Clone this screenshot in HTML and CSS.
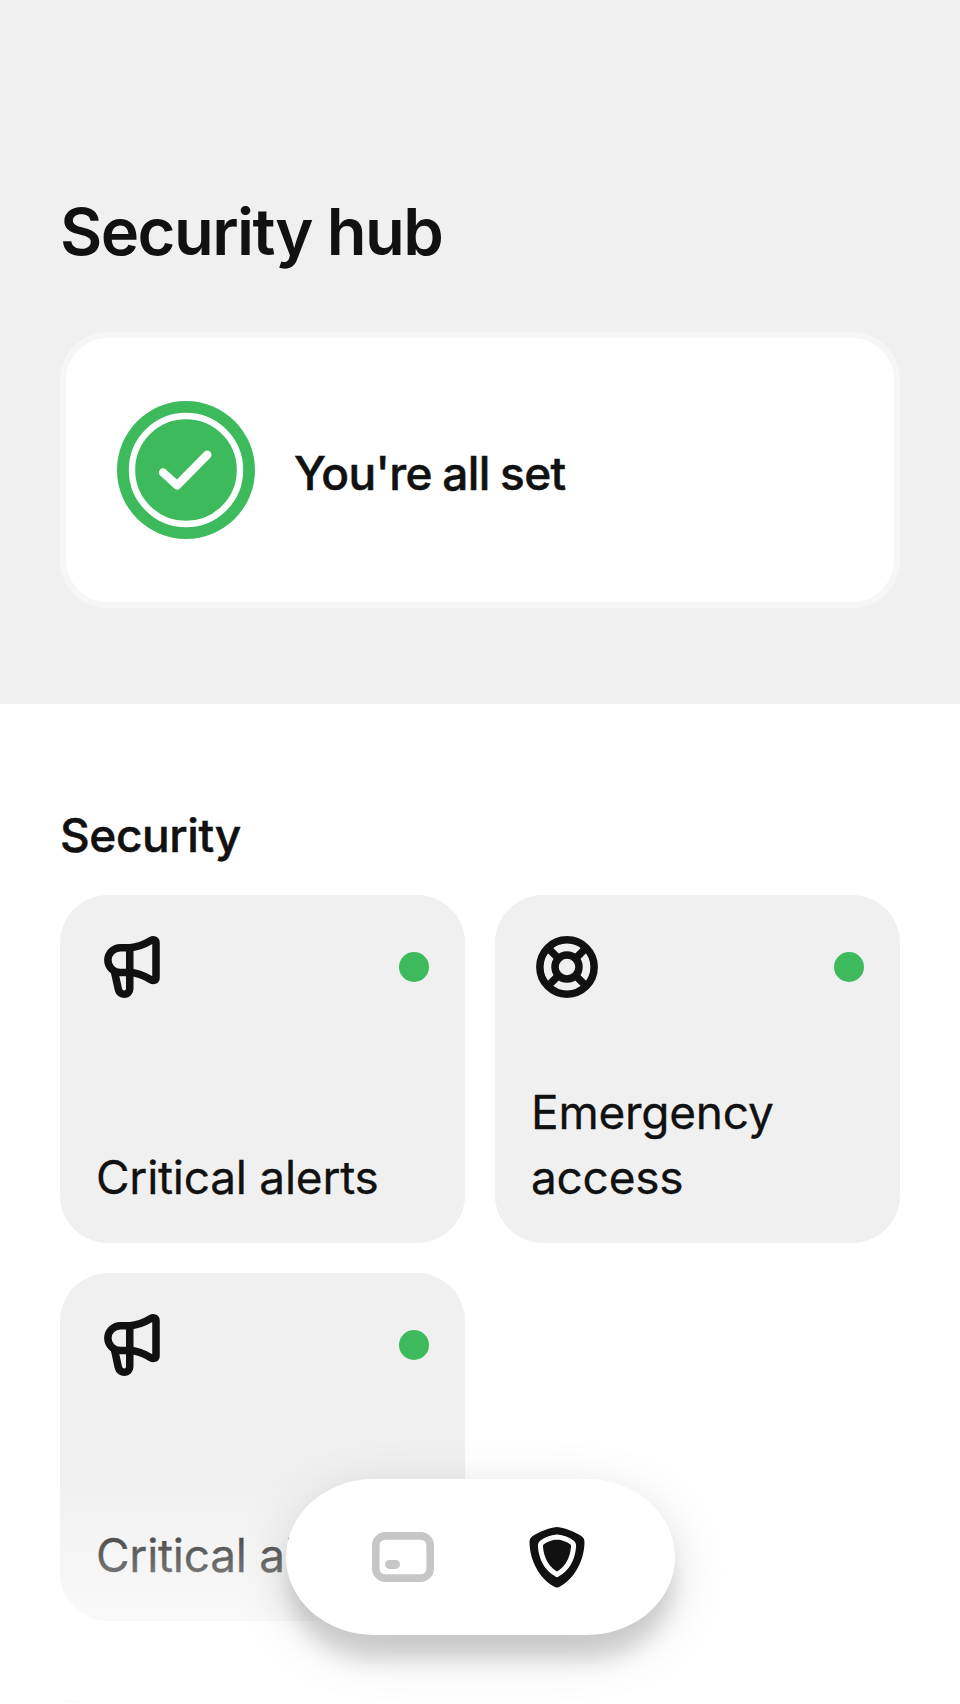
FILE: index.html
```html
<!DOCTYPE html>
<html lang="en">
<head>
<meta charset="utf-8">
<title>Security hub</title>
<link rel="stylesheet" href="styles.css">
</head>
<body>
<svg class="sprite" aria-hidden="true">
  <symbol id="megaphone" viewBox="0 0 24 24">
    <g fill="none" stroke="currentColor" stroke-width="2.5" stroke-linejoin="round" stroke-linecap="round">
      <path d="M11.25 5.55H8.1a4.15 4.15 0 0 0 0 8.3h3.15c2.5 0 4.8 1.05 7.05 2.4.85.5 1.7.2 1.7-.7V3.900c0-.9-.85-1.200-1.700-.7-2.250 1.350-4.550 2.350-7.050 2.350z"/>
      <path d="M11.250 5.550v13.700c0 2.300-3.300 2.500-3.800.2L6.200 13.700"/>
    </g>
  </symbol>
  <symbol id="lifebuoy" viewBox="0 0 24 24">
    <g fill="none" stroke="currentColor" stroke-width="2.5">
      <circle cx="12" cy="12" r="9.05"/>
      <circle cx="12" cy="12" r="4"/>
      <path d="M5.700 5.700l3.500 3.500M18.300 5.700l-3.500 3.500M5.700 18.300l3.500-3.500M18.300 18.300l-3.500-3.500"/>
    </g>
  </symbol>
</svg>
<div class="screen">
  <header class="hero">
    <h1 class="hero-title">Security hub</h1>
    <div class="status-card">
      <svg class="status-icon" viewBox="0 0 138 138">
        <circle cx="69" cy="69" r="69" fill="#3cba5c"/>
        <circle cx="69" cy="69" r="54" fill="none" stroke="#fcfffd" stroke-width="6.4"/>
        <path d="M46 71.5L60.2 84.3 90.3 53.7" fill="none" stroke="#fcfffd" stroke-width="8.4" stroke-linecap="round" stroke-linejoin="round"/>
      </svg>
      <p class="status-text">You're all set</p>
    </div>
  </header>
  <main class="content">
    <h2 class="section-title">Security</h2>
    <div class="tiles">
      <div class="tile">
        <div class="tile-top"><svg class="tile-icon"><use href="#megaphone"/></svg><span class="dot"></span></div>
        <p class="tile-label">Critical alerts</p>
      </div>
      <div class="tile">
        <div class="tile-top"><svg class="tile-icon"><use href="#lifebuoy"/></svg><span class="dot"></span></div>
        <p class="tile-label">Emergency access</p>
      </div>
      <div class="tile">
        <div class="tile-top"><svg class="tile-icon"><use href="#megaphone"/></svg><span class="dot"></span></div>
        <p class="tile-label">Critical alerts</p>
      </div>
    </div>
    <div class="next-section"></div>
  </main>
  <div class="fade"></div>
  <nav class="tabbar">
    <svg class="tab tab-card" viewBox="0 0 72 72">
      <rect x="8.8" y="14.9" width="54.4" height="42.2" rx="9.5" fill="none" stroke="currentColor" stroke-width="7.6"/>
      <rect x="18" y="38.9" width="15" height="9" rx="4.5" fill="currentColor"/>
    </svg>
    <svg class="tab" viewBox="0 0 72 72">
      <path d="M36 6C45 7.100 54 11 61 15.500Q63.600 17.500 63.500 21C63.300 40 53 58 39 65.500Q36 67.500 33 65.500C19 58 8.700 40 8.500 21Q8.400 17.500 11 15.500C18 11 27 7.100 36 6z" fill="currentColor"/>
      <path d="M36 16.100Q45 17 51 21.500Q52.800 23 52.600 25.500C51.500 38 46 48 36 53.500C26 48 20.500 38 19.400 25.500Q19.200 23 21 21.500Q27 17 36 16.100z" fill="currentColor" stroke="#fff" stroke-width="5"/>
    </svg>
  </nav>
</div>
</body>
</html>
```
FILE: styles.css
```css
* { box-sizing: border-box; }
body { margin: 0; background: #fff; color: #111; font-family: Inter, "Liberation Sans", sans-serif; font-variation-settings: "opsz" 32; }
h1, h2, p { margin: 0; }
.sprite { display: none; }
.screen { position: relative; width: 960px; height: 1704px; overflow: hidden; background: #fff; }
.hero { height: 704px; padding: 192px 60px 0; background: #f0f0f0; }
.hero-title { height: 140px; font-size: 65px; font-weight: 600; line-height: 80px; letter-spacing: -1.55px; }
.status-card { display: flex; align-items: center; gap: 39px; height: 276px; padding: 0 51px; border: 6px solid #f6f6f6; border-radius: 48px; background: #fff; }
.status-icon { width: 138px; height: 138px; }
.status-text { padding-top: 6px; font-size: 46px; font-weight: 500; line-height: 60px; letter-spacing: -.65px; word-spacing: -1.2px; -webkit-text-stroke: .5px #111; }
.content { padding: 101px 60px 0; }
.section-title { height: 90px; font-size: 46px; font-weight: 500; line-height: 60px; letter-spacing: -.4px; -webkit-text-stroke: .5px #111; }
.tiles { display: grid; grid-template-columns: 1fr 1fr; gap: 30px; }
.tile { display: flex; flex-direction: column; justify-content: space-between; height: 348px; padding: 36px 36px 33px; border-radius: 48px; background: #f0f0f0; }
.tile-top { display: flex; align-items: center; justify-content: space-between; }
.tile-icon { width: 72px; height: 72px; }
.dot { width: 30px; height: 30px; border-radius: 50%; background: #3cba5c; }
.tile-label { font-size: 46px; line-height: 65px; letter-spacing: -.25px; -webkit-text-stroke: .3px #111; }
.next-section { width: 19px; height: 4px; margin: 79px 0 0 3px; border-radius: 0 4px 0 0; background: #111; }
.fade { position: absolute; left: 0; right: 0; bottom: 0; height: 225px; background: linear-gradient(rgba(255,255,255,0), #fff); }
.tabbar { position: absolute; left: 286px; top: 1479px; display: flex; align-items: center; justify-content: center; gap: 82px; width: 389px; height: 156px; padding-right: 1px; border-radius: 88px / 78px; background: #fff; box-shadow: 0 27px 20px -3px rgba(0,0,0,.12), 0 15px 54px rgba(0,0,0,.15); }
.tab { width: 72px; height: 72px; }
.tab-card { color: #c6c6c6; }
```
